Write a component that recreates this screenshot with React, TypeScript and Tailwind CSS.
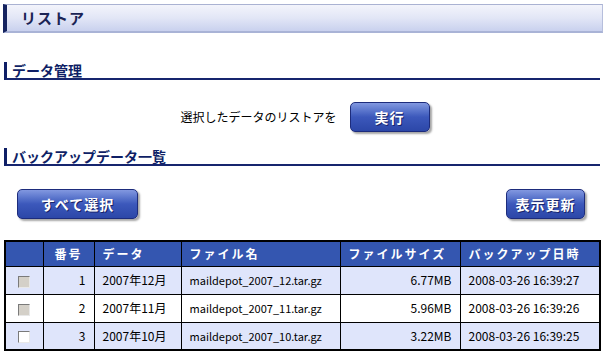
import React from 'react';

const font = { fontFamily: '"Noto Sans CJK JP", "Noto Sans", sans-serif' };

const rows = [
  { no: 1, month: '2007年12月', file: 'maildepot_2007_12.tar.gz', size: '6.77MB', date: '2008-03-26 16:39:27', disabled: true },
  { no: 2, month: '2007年11月', file: 'maildepot_2007_11.tar.gz', size: '5.96MB', date: '2008-03-26 16:39:26', disabled: true },
  { no: 3, month: '2007年10月', file: 'maildepot_2007_10.tar.gz', size: '3.22MB', date: '2008-03-26 16:39:25', disabled: false },
];

function BlueButton({ label, width }: { label: string; width: string }) {
  return (
    <button
      className={`${width} h-[30px] rounded-[5px] border border-[#1d2c7c] bg-gradient-to-b from-[#8298e0] via-[#3c58bb] to-[#2c47a8] text-white text-[14px] font-bold tracking-[1px] shadow-[2px_2px_2px_rgba(0,0,0,0.35)] [text-shadow:1px_1px_0_#16236a]`}
    >
      {label}
    </button>
  );
}

function SectionHeading({ title }: { title: string }) {
  return (
    <div className="mx-[4px] h-[18px] flex items-center border-l-[3px] border-[#0f1f66] border-b-2 border-b-[#16256e] mr-[7px]">
      <span className="pl-[5px] text-[14px] font-bold text-[#0f1f66] leading-none">{title}</span>
    </div>
  );
}

export default function App() {
  return (
    <div className="w-[607px] h-[354px] bg-white overflow-hidden flex flex-col text-black" style={font}>
      <div className="mt-[4px] ml-[3px] mr-[4px] h-[29px] flex items-center border-l-[4px] border-l-[#15235f] border-t border-t-[#aab2d2] border-r border-r-[#b6bedc] border-b-2 border-b-[#a9b3d6] bg-gradient-to-b from-[#f3f4fb] via-[#e2e6f6] to-[#c9d1ee]">
        <span className="pl-[14px] text-[15px] font-bold text-[#1b2455] tracking-[1px]">リストア</span>
      </div>

      <div className="mt-[29px]">
        <SectionHeading title="データ管理" />
      </div>

      <div className="mt-[22px] flex items-center justify-center gap-[13px] pl-[3px]">
        <span className="text-[12px]">選択したデータのリストアを</span>
        <BlueButton label="実行" width="w-[80px]" />
      </div>

      <div className="mt-[16px]">
        <SectionHeading title="バックアップデータ一覧" />
      </div>

      <div className="mt-[23px] flex justify-between pl-[17px] pr-[22px]">
        <BlueButton label="すべて選択" width="w-[121px]" />
        <BlueButton label="表示更新" width="w-[79px]" />
      </div>

      <div className="mt-[21px] mx-[4px] mr-[6px]">
        <table className="w-full border-collapse border-2 border-black text-[12px]">
          <thead>
            <tr className="bg-[#3456b0] text-white h-[25px]">
              <th className="border border-black w-[38px]"></th>
              <th className="border border-black w-[51px] text-center font-bold tracking-[2px]">番号</th>
              <th className="border border-black w-[87px] text-left pl-[8px] font-bold tracking-[2px]">データ</th>
              <th className="border border-black w-[159px] text-left pl-[8px] font-bold tracking-[2px]">ファイル名</th>
              <th className="border border-black w-[120px] text-left pl-[8px] font-bold tracking-[2px]">ファイルサイズ</th>
              <th className="border border-black text-left pl-[8px] font-bold tracking-[2px]">バックアップ日時</th>
            </tr>
          </thead>
          <tbody>
            {rows.map((r, i) => (
              <tr key={r.no} className={`h-[28px] ${i % 2 === 0 ? 'bg-[#dfe5fb]' : 'bg-white'}`}>
                <td className="border border-black text-center">
                  <span
                    className={`inline-block align-middle w-[12px] h-[12px] border border-t-[#7a7a7a] border-l-[#7a7a7a] border-r-[#e8e8e8] border-b-[#e8e8e8] ${r.disabled ? 'bg-[#d4d0c8]' : 'bg-white'}`}
                  />
                </td>
                <td className="border border-black text-right pr-[8px]">{r.no}</td>
                <td className="border border-black pl-[8px]">{r.month}</td>
                <td className="border border-black pl-[8px] text-[11px]">{r.file}</td>
                <td className="border border-black text-right pr-[8px]">{r.size}</td>
                <td className="border border-black pl-[8px]">{r.date}</td>
              </tr>
            ))}
          </tbody>
        </table>
      </div>
    </div>
  );
}
